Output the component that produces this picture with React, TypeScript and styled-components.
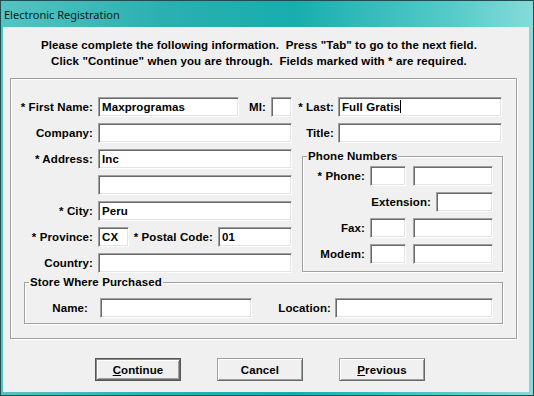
import React from 'react';
import styled, { createGlobalStyle } from 'styled-components';

const GlobalStyle = createGlobalStyle`
    html, body {
        margin: 0;
        padding: 0;
        background: #2a9fa0;
    }
`

const Window = styled.div`
    width: 534px;
    height: 396px;
    box-sizing: border-box;
    display: flex;
    flex-direction: column;
    border: 1px solid #1c4f4e;
    background: linear-gradient(90deg, #55c3c3 0%, #2bb0b0 30%, #18adad 55%, #56cbc9 85%, #86dbd9 100%);
`

const TitleBar = styled.div`
    height: 26px;
    flex-shrink: 0;
    display: flex;
    align-items: center;
    padding-left: 3px;
    font-family: "Noto Sans", "Liberation Sans", sans-serif;
    font-size: 11px;
    color: #0a1a1a;
`

const Client = styled.div`
    flex: 1;
    margin: 0 4px 3px 2px;
    background: #f0f0f0;
    display: flex;
    flex-direction: column;
    font-family: "Liberation Sans", Arial, sans-serif;
    font-size: 11.5px;
    letter-spacing: 0.1px;
    font-weight: bold;
    color: #000;
`

const Header = styled.div`
    padding: 10px 14px 0 0;
    text-align: center;
    line-height: 16px;
    white-space: pre;
`

const MainBox = styled.div`
    margin: 9px 12px 0 7px;
    height: 261px;
    box-sizing: border-box;
    border: 1px solid #a0a0a0;
    box-shadow: inset 1px 1px 0 #fff, 1px 1px 0 #fff;
    padding-top: 18px;
    display: flex;
    flex-direction: column;
`

const Column = styled.div<{ $gap?: number }>`
    display: flex;
    flex-direction: column;
    gap: ${p => p.$gap ?? 6}px;
`

const Row = styled.div`
    display: flex;
    align-items: center;
    height: 20px;
`

const Middle = styled.div`
    display: flex;
    align-items: flex-start;
    margin-top: 6px;
`

const Label = styled.div<{ $w: number; $pr?: number }>`
    width: ${p => p.$w}px;
    flex-shrink: 0;
    box-sizing: border-box;
    padding-right: ${p => p.$pr ?? 5}px;
    text-align: right;
    white-space: pre;
`

const TextBox = styled.div<{ $w: number; $ml?: number }>`
    width: ${p => p.$w}px;
    margin-left: ${p => p.$ml ?? 0}px;
    height: 20px;
    flex-shrink: 0;
    box-sizing: border-box;
    border: 1px solid;
    border-color: #a0a0a0 #fff #fff #a0a0a0;
    box-shadow: inset 1px 1px 0 #696969, inset -1px -1px 0 #e3e3e3;
    background: #fff;
    padding-left: 3px;
    line-height: 18px;
    white-space: pre;
    overflow: hidden;
`

const Caret = styled.span`
    display: inline-block;
    width: 1px;
    height: 13px;
    background: #000;
    vertical-align: -2px;
`

const Group = styled.fieldset<{ $w: number; $ml: number; $mt?: number; $pt: number; $pb: number }>`
    width: ${p => p.$w}px;
    margin: ${p => p.$mt ?? 0}px 0 0 ${p => p.$ml}px;
    padding: ${p => p.$pt}px 0 ${p => p.$pb}px 0;
    min-width: 0;
    box-sizing: border-box;
    border: 1px solid #a0a0a0;
    box-shadow: inset 1px 1px 0 #fff, 1px 1px 0 #fff;
`

const Legend = styled.legend`
    padding: 0 1px;
    margin-left: 4px;
    line-height: 14px;
`

const ButtonRow = styled.div`
    display: flex;
    gap: 36px;
    padding-left: 92px;
    margin-top: 19px;
`

const Button = styled.div<{ $default?: boolean }>`
    width: 86px;
    height: 23px;
    box-sizing: border-box;
    display: flex;
    align-items: center;
    justify-content: center;
    border: 1px solid;
    border-color: ${p => p.$default ? '#555 #555 #555 #555' : '#a0a0a0 #696969 #696969 #a0a0a0'};
    box-shadow: ${p => p.$default
        ? 'inset 1px 1px 0 #8a8a8a, inset -1px -1px 0 #6a6a6a, inset 2px 2px 0 #fff, inset -2px -2px 0 #a0a0a0'
        : 'inset 1px 1px 0 #fff, inset -1px -1px 0 #a0a0a0'};
    background: #f0f0f0;
`

const App: React.FC = () => {
    return (
        <>
            <GlobalStyle />
            <Window>
                <TitleBar>Electronic Registration</TitleBar>
                <Client>
                    <Header>
                        {'Please complete the following information.  Press "Tab" to go to the next field.\nClick "Continue" when you are through.  Fields marked with * are required.'}
                    </Header>
                    <MainBox>
                        <Column>
                            <Row>
                                <Label $w={87}>* First Name:</Label>
                                <TextBox $w={141}>Maxprogramas</TextBox>
                                <Label $w={32}>MI:</Label>
                                <TextBox $w={21} />
                                <Label $w={46} $pr={4}>* Last:</Label>
                                <TextBox $w={164}>Full Gratis<Caret /></TextBox>
                            </Row>
                            <Row>
                                <Label $w={87}>Company:</Label>
                                <TextBox $w={194} />
                                <Label $w={46} $pr={4}>Title:</Label>
                                <TextBox $w={164} />
                            </Row>
                        </Column>
                        <Middle>
                            <Column>
                                <Row>
                                    <Label $w={87}>* Address:</Label>
                                    <TextBox $w={194}>Inc</TextBox>
                                </Row>
                                <Row>
                                    <TextBox $w={194} $ml={87} />
                                </Row>
                                <Row>
                                    <Label $w={87}>* City:</Label>
                                    <TextBox $w={194}>Peru</TextBox>
                                </Row>
                                <Row>
                                    <Label $w={87}>* Province:</Label>
                                    <TextBox $w={31}>CX</TextBox>
                                    <Label $w={89}>* Postal Code:</Label>
                                    <TextBox $w={74}>01</TextBox>
                                </Row>
                                <Row>
                                    <Label $w={87}>Country:</Label>
                                    <TextBox $w={194} />
                                </Row>
                            </Column>
                            <Group $w={201} $ml={10} $pt={3} $pb={7}>
                                <Legend>Phone Numbers</Legend>
                                <Column>
                                    <Row>
                                        <Label $w={67}>* Phone:</Label>
                                        <TextBox $w={36} />
                                        <TextBox $w={80} $ml={7} />
                                    </Row>
                                    <Row>
                                        <Label $w={133}>Extension:</Label>
                                        <TextBox $w={57} />
                                    </Row>
                                    <Row>
                                        <Label $w={67}>Fax:</Label>
                                        <TextBox $w={36} />
                                        <TextBox $w={80} $ml={7} />
                                    </Row>
                                    <Row>
                                        <Label $w={67}>Modem:</Label>
                                        <TextBox $w={36} />
                                        <TextBox $w={80} $ml={7} />
                                    </Row>
                                </Column>
                            </Group>
                        </Middle>
                        <Group $w={479} $ml={13} $mt={2} $pt={9} $pb={5}>
                            <Legend>Store Where Purchased</Legend>
                            <Row>
                                <Label $w={75} $pr={12}>Name:</Label>
                                <TextBox $w={152} />
                                <Label $w={83} $pr={4}>Location:</Label>
                                <TextBox $w={158} />
                            </Row>
                        </Group>
                    </MainBox>
                    <ButtonRow>
                        <Button $default><span><u>C</u>ontinue</span></Button>
                        <Button>Cancel</Button>
                        <Button><span><u>P</u>revious</span></Button>
                    </ButtonRow>
                </Client>
            </Window>
        </>
    )
}

export default App;
